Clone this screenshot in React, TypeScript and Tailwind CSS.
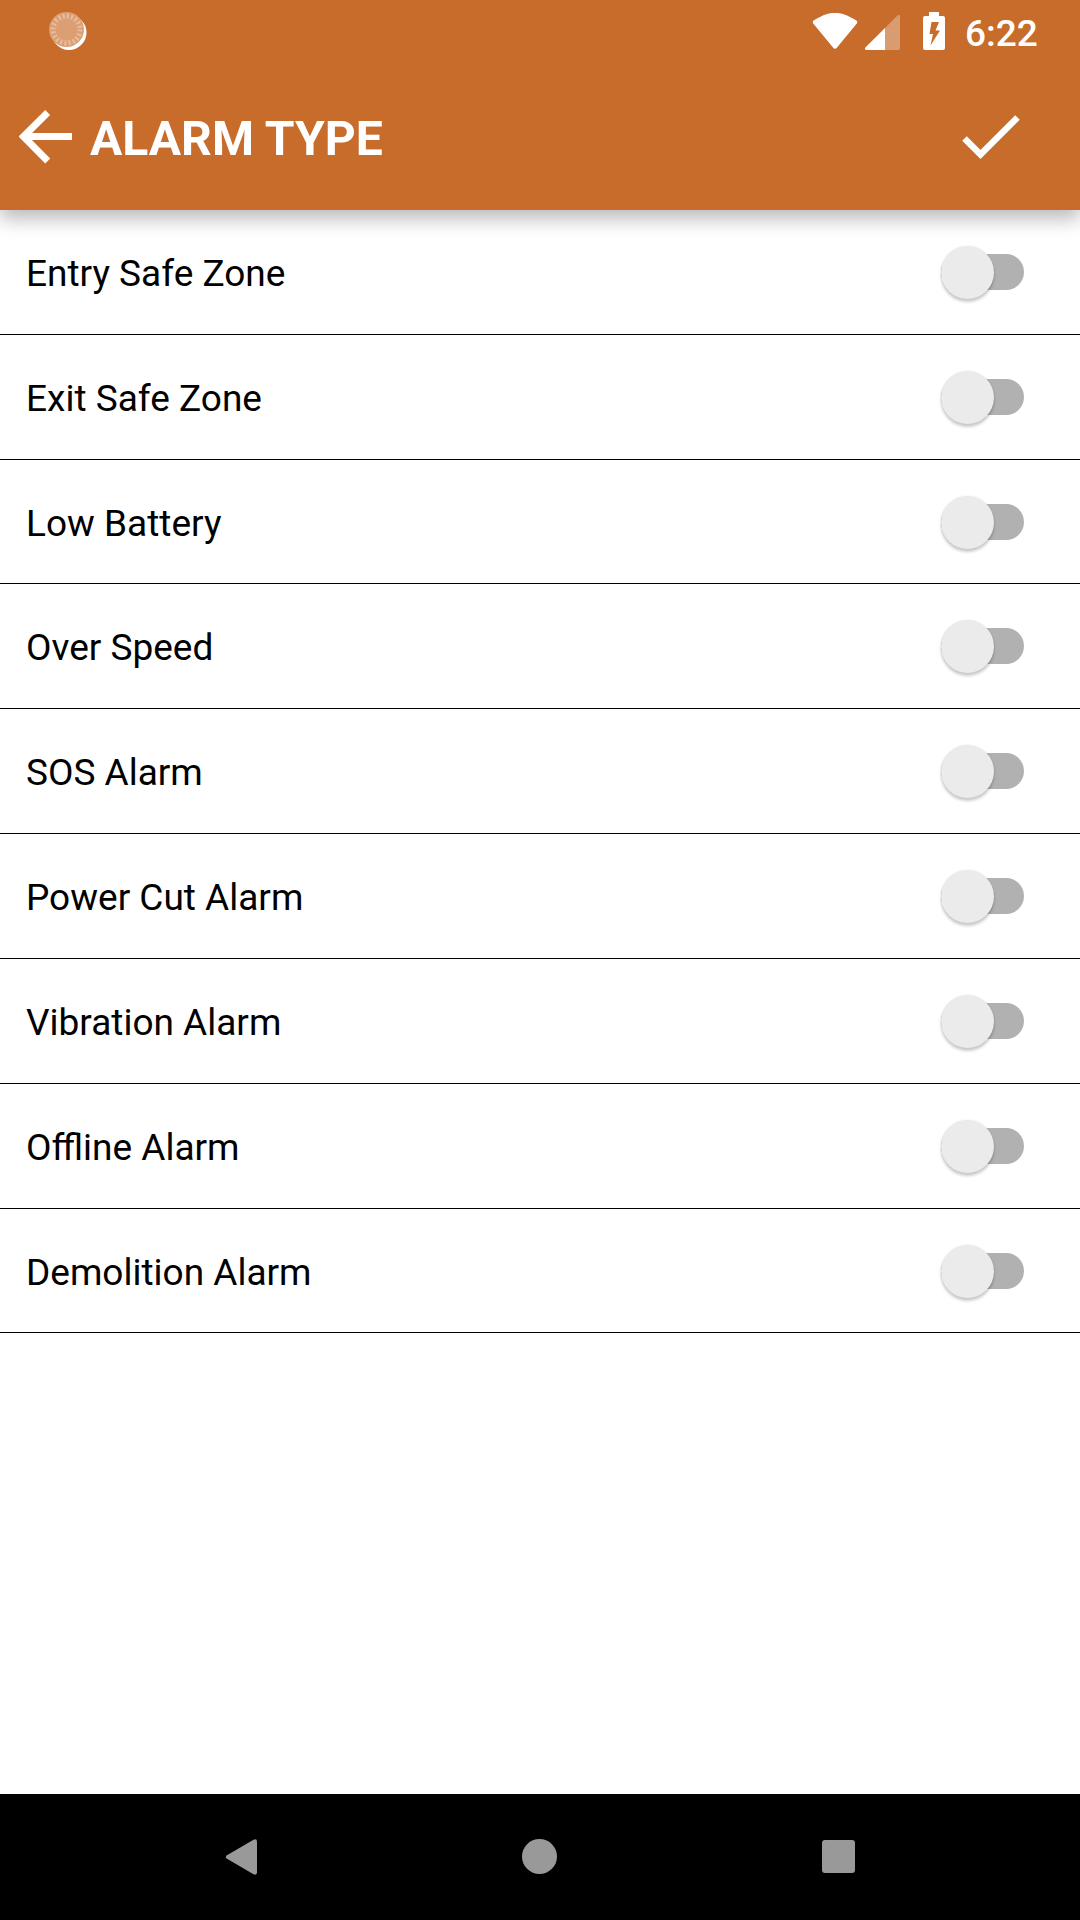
import React, { useState } from 'react'

interface AlarmItem {
  name: string
  height: string
}

// 47.5dp rows, rounded to whole device pixels
const alarms: AlarmItem[] = [
  { name: 'Entry Safe Zone', height: 'h-[125px]' },
  { name: 'Exit Safe Zone', height: 'h-[125px]' },
  { name: 'Low Battery', height: 'h-[124px] pt-px' },
  { name: 'Over Speed', height: 'h-[125px]' },
  { name: 'SOS Alarm', height: 'h-[125px]' },
  { name: 'Power Cut Alarm', height: 'h-[125px]' },
  { name: 'Vibration Alarm', height: 'h-[125px]' },
  { name: 'Offline Alarm', height: 'h-[125px]' },
  { name: 'Demolition Alarm', height: 'h-[124px] pt-px' },
]

function StatusBar(){
  return (
    <div className="flex items-start justify-between h-[63px] pl-[49px] pr-[42px]">
      <svg className="mt-3 w-[38px] h-[39px]" viewBox="0 0 38 39">
        <circle cx="20" cy="20.5" r="17.5" fill="#fff" />
        <circle cx="17.5" cy="17.5" r="17.5" fill="#dc9e73" />
        <circle cx="17.5" cy="17.5" r="13.5" fill="none" stroke="#e8bd9f" strokeWidth="5" strokeDasharray="2 2.241" />
      </svg>
      <div className="flex items-start">
        <svg className="mt-3 w-[133px] h-[40px]" viewBox="812 12 133 40" fill="#fff">
          <path d="M813 23.200Q812 21.600 813.600 20.400C823 14.800 829 13 835 13s12 1.800 21.400 7.400q1.600 1.200.6 2.800L837 47.500q-2 2.600-4 0z" />
          <path d="M885 28v22h-18.500q-2.800-.5-.8-2.800z" />
          <path d="M885 28l12.500-12.600q2.500-1.600 2.500 1V48q0 2-2 2h-13z" fillOpacity=".33" />
          <path fillRule="evenodd" d="M929 12h10v4h4q2 0 2 2v30q0 2-2 2h-18q-2 0-2-2V18q0-2 2-2h4zM931.500 22L929.500 34h3.500l-2.500 11.500L940 30.500h-4.500L939 22z" />
        </svg>
        <span className="mt-3 ml-5 w-[73px] text-[37px] leading-[44px] font-medium whitespace-nowrap">6:22</span>
      </div>
    </div>
  )
}

function Toggle({ on, onChange }: { on: boolean, onChange: () => void }){
  return (
    <button role="switch" aria-checked={on} onClick={onChange} className="flex items-center w-[83px] h-[54px]">
      <span className="flex items-center w-full h-9 rounded-full bg-[#b1b1b1]">
        <span className={`shrink-0 size-[53px] rounded-full bg-[#ebebeb] shadow-[0_3px_3px_rgba(0,0,0,0.2),0_0_2px_rgba(0,0,0,0.1)] ${on ? 'ml-auto' : ''}`} />
      </span>
    </button>
  )
}

export default function AlarmTypePage(){
  const [enabled, setEnabled] = useState<string[]>([])

  function toggle(name: string){
    setEnabled(enabled.includes(name) ? enabled.filter(n => n !== name) : [...enabled, name])
  }

  return (
    <div className="flex flex-col w-[1080px] h-[1920px] bg-white font-[Roboto,sans-serif]">
      {/* Header */}
      <header className="relative shrink-0 h-[210px] bg-[#c76c2a] text-white shadow-[0_9px_18px_rgba(0,0,0,0.27)]">
        <StatusBar />
        <div className="flex items-center h-[147px] pl-[19px] pr-[60px]">
          <svg className="w-[54px] h-[54px]" viewBox="0 0 54 54" fill="none" stroke="#fff" strokeWidth="7">
            <path d="M28.700 2.500L4.500 26.500l24.200 24.500M4.500 26.500H53" />
          </svg>
          <h1 className="mt-1 ml-[17px] text-[48.1px] leading-[56px] font-bold">ALARM TYPE</h1>
          <svg className="mt-0.5 ml-auto w-[58px] h-[45px]" viewBox="0 0 58 45" fill="none" stroke="#fff" strokeWidth="6.500">
            <path d="M2.500 23.500l16 16L55.500 2.500" />
          </svg>
        </div>
      </header>

      {/* Alarm list */}
      <ul className="flex-1">
        {alarms.map((a: AlarmItem) => (
          <li key={a.name} className={`flex items-center justify-between pl-[26px] pr-14 border-b border-black ${a.height}`}>
            <span className="pt-[3px] text-[37px] leading-[44px] text-black">{a.name}</span>
            <Toggle on={enabled.includes(a.name)} onChange={() => toggle(a.name)} />
          </li>
        ))}
      </ul>

      {/* Navigation bar */}
      <nav className="flex items-center shrink-0 h-[126px] pl-[225px] bg-black">
        <svg className="w-8 h-9" viewBox="0 0 32 36" fill="#999">
          <path d="M28.500.800q3.500-1.500 3.500 2v30.400q0 3.500-3.500 2L2 19.800q-2.500-1.800 0-3.600z" />
        </svg>
        <span className="mb-px ml-[265px] size-[35px] rounded-full bg-[#999]" />
        <span className="mb-px ml-[265px] size-[33px] rounded-[3px] bg-[#999]" />
      </nav>
    </div>
  )
}
